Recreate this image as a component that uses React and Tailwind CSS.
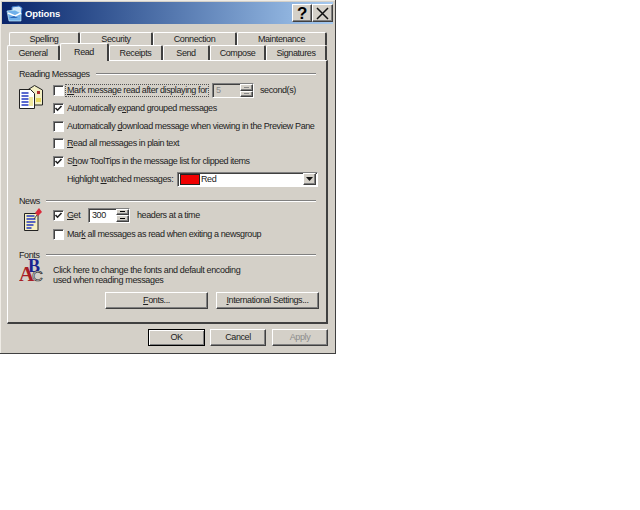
import React from "react";

const raised = "border border-t-white border-l-white border-r-[#404040] border-b-[#404040] shadow-[inset_-1px_-1px_0_#808080]";
const sunken = "border border-t-[#808080] border-l-[#808080] border-r-white border-b-white shadow-[inset_1px_1px_0_#404040]";

function U({ children }) {
  return <span className="underline underline-offset-1">{children}</span>;
}

function Check({ checked }) {
  return (
    <div className={`w-[9px] h-[9px] box-content bg-white shrink-0 flex items-center justify-center ${sunken}`}>
      {checked && (
        <svg width="9" height="9" viewBox="0 0 9 9">
          <path d="M1.500 4l2 2.200L7.500 2" fill="none" stroke="#222" strokeWidth="1.600" />
        </svg>
      )}
    </div>
  );
}

function Row({ checked, children, focus, h = "h-[18px]" }) {
  return (
    <div className={`flex items-center ${h} pl-[45px]`}>
      <Check checked={checked} />
      <span className={`ml-[2px] px-[1px] whitespace-nowrap ${focus ? "outline-1 outline-dotted outline-[#555]" : ""}`}>{children}</span>
    </div>
  );
}

function Section({ title }) {
  return (
    <div className="flex items-center h-[12px] pl-[11px] pr-[10px]">
      <span className="whitespace-nowrap">{title}</span>
      <div className="flex-1 ml-[6px] h-[2px] border-t border-t-[#808080] border-b border-b-white" />
    </div>
  );
}

function Spin({ value, disabled }) {
  return (
    <div className={`flex h-[15px] w-[42px] ${disabled ? "bg-[#d4d0c8] text-[#888]" : "bg-white"} ${sunken}`}>
      <span className="flex-1 pl-[3px] leading-[13px]">{value}</span>
      <div className="w-[13px] flex flex-col">
        {[0, 1].map((i) => (
          <div key={i} className={`h-[6.500px] bg-[#d4d0c8] flex items-center justify-center ${raised}`}>
            <div className={`w-[5px] h-[1px] ${disabled ? "bg-[#888]" : "bg-black"}`} />
          </div>
        ))}
      </div>
    </div>
  );
}

function Tab({ w, h, children, active }) {
  return (
    <div
      className={`${w} ${h} flex items-center justify-center border-t border-l border-t-white border-l-white border-r-2 border-r-[#404040] rounded-t-[2px] ${
        active ? "-mt-[2px] -mb-[1px] relative z-10 bg-[#d4d0c8]" : ""
      }`}
    >
      {children}
    </div>
  );
}

function Btn({ w, children, def, disabled, ml = "" }) {
  return (
    <div
      className={`${w} ${ml} h-[17px] flex items-center justify-center ${
        def ? "border border-black shadow-[inset_1px_1px_0_white,inset_-1px_-1px_0_#808080]" : raised
      } ${disabled ? "text-[#8c8c8c]" : ""}`}
    >
      {children}
    </div>
  );
}

function TitleIcon() {
  return (
    <svg width="17" height="17" viewBox="0 0 17 17" className="shrink-0">
      <path d="M6 2l7-1 3 2-1 7-9 1z" fill="#cfe4f7" stroke="#3a78c8" />
      <path d="M1 6l8-1 6 3v8H3z" fill="#6fb0ea" stroke="#dff" strokeWidth=".6" />
      <path d="M2 8l7 3 6-3" fill="none" stroke="#fff" strokeWidth="1.400" />
      <path d="M3 13l5-2 4 2" fill="#2a66b8" />
    </svg>
  );
}

function MessagesIcon() {
  return (
    <svg width="24" height="24" viewBox="0 0 24 24" className="shrink-0">
      <path d="M8.500 5l7-4.500 8 4.500v15h-15z" fill="#f3efc4" stroke="#222" />
      <rect x="18" y="6" width="3" height="3" fill="#b03030" />
      <rect x="17" y="13" width="5" height="4" fill="#e6d860" />
      <path d="M.5 4.500h11l4 4v15H.500z" fill="#fff" stroke="#222" />
      <path d="M2.500 8h7M2.500 11h7M2.500 14h7M2.500 17h7M2.500 20h7" stroke="#2438c0" strokeWidth="1.400" />
      <path d="M10 12h4v9h-4z" fill="#f0e8a0" />
    </svg>
  );
}

function NewsIcon() {
  return (
    <svg width="18" height="23" viewBox="0 0 18 23" className="shrink-0">
      <path d="M.5 5.500h13.500v17H.500z" fill="#f5f0c0" stroke="#222" />
      <path d="M2.500 8h8M2.500 11h9M2.500 14h9M2.500 17h7M2.500 20h5" stroke="#2438c0" strokeWidth="1.400" />
      <path d="M10 11l3-4" stroke="#444" />
      <path d="M11 5l4-5 3 4-4 4z" fill="#d92a3a" />
    </svg>
  );
}

function FontsIcon() {
  return (
    <svg width="26" height="30" viewBox="0 0 26 30" className="shrink-0">
      <text x="9" y="16" fontFamily="Liberation Serif, serif" fontWeight="700" fontSize="18" fill="#1a2390">B</text>
      <text x="13" y="25" fontFamily="Liberation Sans, sans-serif" fontSize="15" fill="#fff" stroke="#333" strokeWidth=".7">C</text>
      <text x="0" y="25" fontFamily="Liberation Serif, serif" fontWeight="700" fontSize="21" fill="#a81c24">A</text>
    </svg>
  );
}

export default function App() {
  return (
    <div className="w-[640px] h-[510px] bg-white text-[9px] leading-[11px] text-[#222] tracking-[-0.4px] font-['Liberation_Sans',sans-serif]">
      <div className="w-[336px] h-[354px] pt-[2px] px-[2px] bg-[#d4d0c8] border-r border-b border-r-[#404040] border-b-[#404040] shadow-[inset_1px_1px_0_#efece6]">
        {/* Title bar */}
        <div className="h-[22px] flex items-center pl-[4px] bg-gradient-to-r from-[#0a246a] to-[#a6caf0]">
          <TitleIcon />
          <span className="ml-[2px] text-white font-bold text-[9.500px] tracking-[-0.1px]">Options</span>
          <div className="flex-1" />
          <div className={`w-[20px] h-[18px] bg-[#d4d0c8] flex items-center justify-center text-[17px] font-bold text-black ${raised}`}>?</div>
          <div className={`w-[21px] h-[18px] bg-[#d4d0c8] flex items-center justify-center ${raised}`}>
            <svg width="13" height="13" viewBox="0 0 13 13">
              <path d="M1 1l11 11M12 1L1 12" stroke="#111" strokeWidth="1.500" />
            </svg>
          </div>
        </div>

        {/* Tabs */}
        <div className="mt-[8px] px-[5px]">
          <div className="flex pl-[2px] h-[13px]">
            <Tab w="w-[71px]" h="h-[13px]">Spelling</Tab>
            <Tab w="w-[73px]" h="h-[13px]">Security</Tab>
            <Tab w="w-[84px]" h="h-[13px]">Connection</Tab>
            <Tab w="w-[90px]" h="h-[13px]">Maintenance</Tab>
          </div>
          <div className="flex h-[15px]">
            <Tab w="w-[53px]" h="h-[15px]">General</Tab>
            <Tab w="w-[49px]" h="h-[18px]" active>Read</Tab>
            <Tab w="w-[54px]" h="h-[15px]">Receipts</Tab>
            <Tab w="w-[47px]" h="h-[15px]">Send</Tab>
            <Tab w="w-[56px]" h="h-[15px]">Compose</Tab>
            <Tab w="w-[61px]" h="h-[15px]">Signatures</Tab>
          </div>

          {/* Panel */}
          <div className="w-[321px] h-[264px] pt-[7px] border-t border-l border-t-white border-l-white border-r-2 border-b-2 border-r-[#404040] border-b-[#404040]">
            <Section title="Reading Messages" />
            <div className="relative">
              <div className="absolute left-[11px] top-[5px]"><MessagesIcon /></div>
              <div className="pt-[1px]">
                <Row focus><U>M</U>ark message read after displaying for</Row>
              </div>
              <div className="absolute left-[204px] top-[3px] flex items-center">
                <Spin value="5" disabled />
                <span className="ml-[6px]">second(s)</span>
              </div>
              <Row checked>Automatically e<U>x</U>pand grouped messages</Row>
              <Row>Automatically <U>d</U>ownload message when viewing in the Preview Pane</Row>
              <Row h="h-[17px]"><U>R</U>ead all messages in plain text</Row>
              <Row checked>S<U>h</U>ow ToolTips in the message list for clipped items</Row>
              <div className="flex items-center h-[18px] pl-[59px] whitespace-nowrap">
                <span className="w-[110px]">Highlight <U>w</U>atched messages:</span>
                <div className={`w-[141px] h-[15px] bg-white flex items-center pl-[2px] pr-[1px] ${sunken}`}>
                  <div className="w-[20px] h-[11px] bg-[#f00000] border border-[#222]" />
                  <span className="ml-[1px] flex-1">Red</span>
                  <div className={`w-[13px] h-[12px] bg-[#d4d0c8] flex items-center justify-center ${raised}`}>
                    <svg width="7" height="4" viewBox="0 0 7 4"><path d="M0 0h7L3.500 4z" fill="#111" /></svg>
                  </div>
                </div>
              </div>
            </div>

            <div className="mt-[7px]"><Section title="News" /></div>
            <div className="relative">
              <div className="absolute left-[16px] top-[3px]"><NewsIcon /></div>
              <div className="flex items-center h-[20px] -mt-[2px] pl-[45px]">
                <Check checked />
                <span className="ml-[3px] w-[21px]"><U>G</U>et</span>
                <Spin value="300" />
                <span className="ml-[7px]">headers at a time</span>
              </div>
              <Row>Mar<U>k</U> all messages as read when exiting a newsgroup</Row>
            </div>

            <div className="mt-[6px]"><Section title="Fonts" /></div>
            <div className="relative">
              <div className="absolute left-[11px] -top-[5px]"><FontsIcon /></div>
              <div className="pl-[45px] pt-[4px] leading-[10px] tracking-[-0.35px]">
                <div>Click here to change the fonts and default encoding</div>
                <div>used when reading messages</div>
              </div>
              <div className="flex justify-end gap-[8px] pr-[7px] mt-[7px]">
                <Btn w="w-[103px]"><span><U>F</U>onts...</span></Btn>
                <Btn w="w-[103px]"><span><U>I</U>nternational Settings...</span></Btn>
              </div>
            </div>
          </div>

          {/* Bottom buttons */}
          <div className="flex justify-end mt-[5px]">
            <Btn w="w-[57px]" def>OK</Btn>
            <Btn w="w-[56px]" ml="ml-[5px]">Cancel</Btn>
            <Btn w="w-[56px]" ml="ml-[6px]" disabled>Apply</Btn>
          </div>
        </div>
      </div>
    </div>
  );
}
